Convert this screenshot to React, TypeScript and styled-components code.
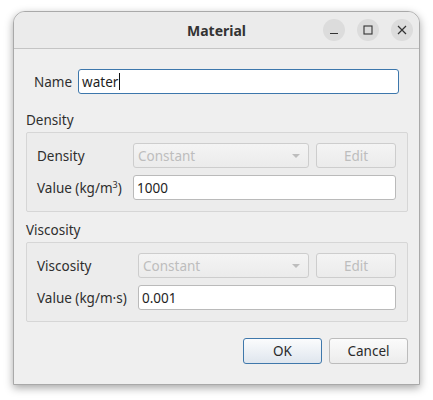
import styled, { createGlobalStyle } from "styled-components";

const GlobalStyle = createGlobalStyle`
  html, body {
    margin: 0;
    padding: 0;
    background: #ffffff;
  }
  body {
    font-family: "Noto Sans", "DejaVu Sans", sans-serif;
    font-size: 13.5px;
    color: #303030;
  }
`;

export default function App() {
  return (
    <>
      <GlobalStyle />
      <Page>
        <Window>
          <TitleBar>
            <Title>Material</Title>
            <WindowControls>
              <CircleButton aria-label="Minimize">
                <svg width="10" height="10" viewBox="0 0 10 10">
                  <path d="M1 8.5h8" stroke="#333" strokeWidth="1.2" />
                </svg>
              </CircleButton>
              <CircleButton aria-label="Maximize">
                <svg width="10" height="10" viewBox="0 0 10 10">
                  <rect x="1" y="1" width="8" height="8" fill="none" stroke="#333" strokeWidth="1.1" />
                </svg>
              </CircleButton>
              <CircleButton aria-label="Close">
                <svg width="10" height="10" viewBox="0 0 10 10">
                  <path d="M1 1l8 8M9 1l-8 8" stroke="#333" strokeWidth="1.2" />
                </svg>
              </CircleButton>
            </WindowControls>
          </TitleBar>

          <Body>
            <NameRow>
              <Label>Name</Label>
              <TextField $focused>
                water
                <Caret />
              </TextField>
            </NameRow>

            <GroupTitle $top={17}>Density</GroupTitle>
            <GroupBox>
              <FormGrid $labelWidth={96}>
                <Label>Density</Label>
                <Combo>
                  Constant
                  <Arrow />
                </Combo>
                <PushButton disabled>Edit</PushButton>
                <Label>
                  Value (kg/m<sup>3</sup>)
                </Label>
                <ValueField>1000</ValueField>
              </FormGrid>
            </GroupBox>

            <GroupTitle $top={9}>Viscosity</GroupTitle>
            <GroupBox>
              <FormGrid $labelWidth={101}>
                <Label>Viscosity</Label>
                <Combo>
                  Constant
                  <Arrow />
                </Combo>
                <PushButton disabled>Edit</PushButton>
                <Label>Value (kg/m·s)</Label>
                <ValueField>0.001</ValueField>
              </FormGrid>
            </GroupBox>

            <ButtonRow>
              <DialogButton $default>OK</DialogButton>
              <DialogButton>Cancel</DialogButton>
            </ButtonRow>
          </Body>
        </Window>
      </Page>
    </>
  );
}

const Page = styled.div`
  width: 433px;
  height: 400px;
  padding: 11px 0 0 13px;
  box-sizing: border-box;
`;

const Window = styled.div`
  width: 407px;
  box-sizing: border-box;
  border: 1px solid #a9a9a9;
  border-radius: 12px 12px 0 0;
  background: #efefef;
  box-shadow: 0 3px 9px rgba(0, 0, 0, 0.35);
  overflow: hidden;
`;

const TitleBar = styled.div`
  height: 36px;
  border-bottom: 1px solid #c4c4c4;
  background: #ebebeb;
  display: flex;
  align-items: center;
  justify-content: center;
  position: relative;
`;

const Title = styled.div`
  font-weight: 700;
  font-size: 14px;
  color: #333;
`;

const WindowControls = styled.div`
  position: absolute;
  right: 6px;
  top: 7px;
  display: flex;
  gap: 12px;
`;

const CircleButton = styled.div`
  width: 22px;
  height: 22px;
  border-radius: 50%;
  background: #dcdcdc;
  display: flex;
  align-items: center;
  justify-content: center;
`;

const Body = styled.div`
  padding: 20px 11px 20px 12px;
  display: flex;
  flex-direction: column;
`;

const NameRow = styled.div`
  display: flex;
  align-items: center;
  gap: 6px;
  padding: 0 9px 0 8px;
`;

const Label = styled.span`
  white-space: nowrap;
  color: #2e2e2e;

  sup {
    font-size: 9px;
    line-height: 0;
  }
`;

const Field = styled.div`
  height: 25px;
  box-sizing: border-box;
  background: #ffffff;
  border-radius: 3px;
  display: flex;
  align-items: center;
  padding: 0 3px;
  color: #1e1e1e;
`;

const TextField = styled(Field)<{ $focused?: boolean }>`
  flex: 1;
  border: 1px solid ${({ $focused }) => ($focused ? "#3d77ac" : "#bababa")};
`;

const ValueField = styled(Field)`
  grid-column: 2 / 4;
  border: 1px solid #bababa;
`;

const Caret = styled.span`
  display: inline-block;
  width: 1px;
  height: 17px;
  background: #111;
  margin-left: 1px;
`;

const GroupTitle = styled.div<{ $top: number }>`
  margin-top: ${({ $top }) => $top}px;
  margin-bottom: 3px;
  line-height: 18px;
  color: #2e2e2e;
`;

const GroupBox = styled.div`
  border: 1px solid #d6d6d6;
  border-radius: 2px;
  background: #ececec;
  padding: 10px 11px 11px 10px;
`;

const FormGrid = styled.div<{ $labelWidth: number }>`
  display: grid;
  grid-template-columns: ${({ $labelWidth }) => $labelWidth - 7}px 1fr 80px;
  column-gap: 7px;
  row-gap: 7px;
  align-items: center;
`;

const Combo = styled.div`
  height: 25px;
  box-sizing: border-box;
  border: 1px solid #cdcdcd;
  border-radius: 3px;
  background: linear-gradient(#f4f4f4, #ebebeb);
  color: #bdbdbd;
  display: flex;
  align-items: center;
  justify-content: space-between;
  padding: 0 8px 0 4px;
`;

const Arrow = styled.span`
  width: 0;
  height: 0;
  border-left: 4px solid transparent;
  border-right: 4px solid transparent;
  border-top: 4px solid #bdbdbd;
`;

const PushButton = styled.button`
  height: 25px;
  box-sizing: border-box;
  border: 1px solid #cdcdcd;
  border-radius: 3px;
  background: linear-gradient(#f4f4f4, #ebebeb);
  color: #bdbdbd;
  font: inherit;
  padding: 0;
`;

const ButtonRow = styled.div`
  margin-top: 16px;
  display: flex;
  justify-content: flex-end;
  gap: 7px;
`;

const DialogButton = styled.button<{ $default?: boolean }>`
  width: 79px;
  height: 26px;
  box-sizing: border-box;
  border-radius: 3px;
  font: inherit;
  color: #2a2a2a;
  padding: 0;
  border: 1px solid ${({ $default }) => ($default ? "#3f78ab" : "#bcbcbc")};
  background: ${({ $default }) =>
    $default
      ? "linear-gradient(#fbfcfd, #dfe6ee)"
      : "linear-gradient(#fbfbfb, #ececec)"};
`;
